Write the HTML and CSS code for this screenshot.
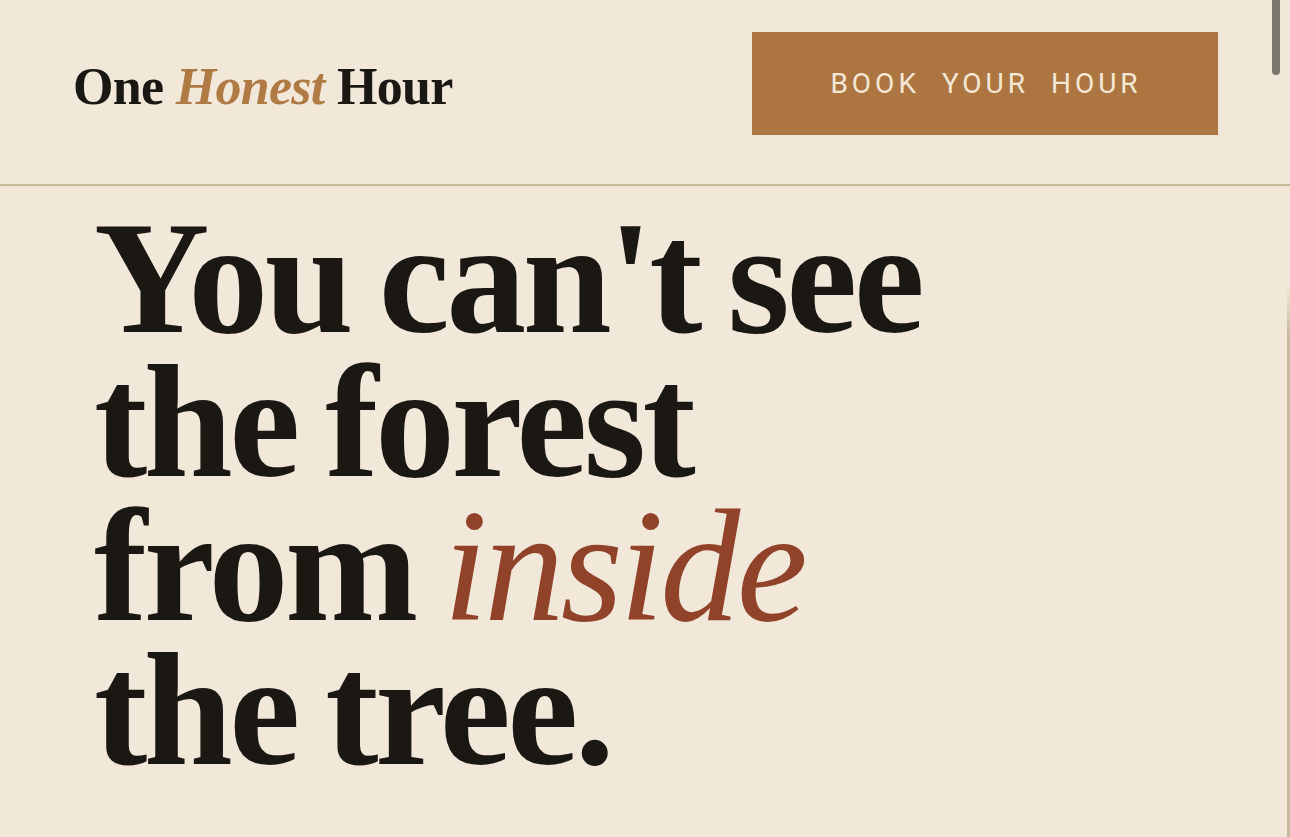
FILE: index.html
```html
<!DOCTYPE html>
<html lang="en">
<head>
<meta charset="utf-8">
<title>One Honest Hour</title>
<link rel="stylesheet" href="styles.css">
</head>
<body>
<header class="site-header">
  <a class="logo" href="#">One <em>Honest</em> Hour</a>
  <a class="cta" href="#">Book your hour</a>
</header>
<main class="hero">
  <h1 class="headline">You can't see<br>the forest<br>from <em>inside</em><br>the tree.</h1>
</main>
<div class="scroll-thumb" aria-hidden="true"></div>
</body>
</html>
```

FILE: styles.css
```css
html, body {
  margin: 0;
  padding: 0;
}
body {
  position: relative;
  background: #f1e8da;
  color: #1b1712;
  font-family: "Liberation Serif", "Times New Roman", serif;
  height: 837px;
  overflow: hidden;
}
.site-header {
  display: flex;
  align-items: center;
  justify-content: space-between;
  padding: 32px 72px 49px 73px;
  border-bottom: 2px solid #c8b99d;
}
.logo {
  color: #1b1712;
  text-decoration: none;
  font-weight: 700;
  font-size: 52px;
  letter-spacing: -0.7px;
  line-height: 1;
  margin-top: 6px;
}
.logo em {
  color: #b07a44;
  font-style: italic;
}
.cta {
  display: flex;
  align-items: center;
  justify-content: center;
  width: 466px;
  height: 103px;
  background: #ad7641;
  color: #f3e7d6;
  text-decoration: none;
  text-transform: uppercase;
  font-family: Roboto, "Noto Sans", sans-serif;
  font-weight: 400;
  font-size: 28px;
  letter-spacing: 4px;
  word-spacing: 11px;
  padding-left: 2px;
  box-sizing: border-box;
}
.hero {
  padding: 20px 0 0 94px;
  min-height: 671px;
  background-image: linear-gradient(to bottom, rgba(200,185,157,0) 0, rgba(200,185,157,0) 100px, #c8b99d 150px);
  background-size: 3px 100%;
  background-repeat: no-repeat;
  background-position: right top;
}
.headline {
  margin: 0;
  font-weight: 700;
  font-size: 160px;
  line-height: 144px;
  letter-spacing: -3.5px;
  word-spacing: -8px;
}
.headline em {
  font-weight: 400;
  font-style: italic;
  color: #91432a;
}
.scroll-thumb {
  position: absolute;
  top: 0;
  right: 10px;
  width: 8px;
  height: 75px;
  border-radius: 0 0 4px 4px;
  background: #7a766c;
}
```
